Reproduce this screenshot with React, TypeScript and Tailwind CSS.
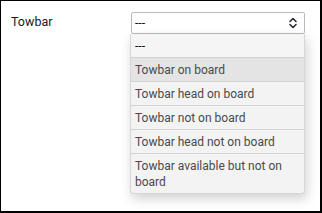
import React from 'react';

const OPTIONS = [
    'Towbar on board',
    'Towbar head on board',
    'Towbar not on board',
    'Towbar head not on board',
    'Towbar available but not on board',
];

const UpDown = () => (
    <svg width="10" height="14" viewBox="0 0 10 14" fill="none" stroke="#2b2b33" strokeWidth="1.6" strokeLinecap="round" strokeLinejoin="round">
        <path d="M2 5.5 5 2.5 8 5.5" />
        <path d="M2 8.5 5 11.5 8 8.5" />
    </svg>
);

export default function App() {
    return (
        <div className="w-[322px] h-[213px] bg-white border-black border-t border-l border-r-2 border-b-2 overflow-hidden font-['Roboto',sans-serif] text-[12px] leading-[16px]">
            <div className="flex items-start pt-[11px] pl-[10px]">
                <div className="w-[120px] pt-[1.5px] text-[#1a1a1a] text-[12.5px]">Towbar</div>
                <div className="relative">
                    <div className="w-[174px] h-[22px] border border-[#b9b9b9] rounded-[2px] bg-white flex items-center justify-between pl-[3px] pr-[6px] text-[#111]">
                        <span>---</span>
                        <UpDown />
                    </div>
                    <div className="absolute left-[-1px] top-[22px] w-[175px] bg-[#f3f3f3] border-x border-b border-[#d6d6d6] rounded-b-[3px] shadow-[2px_5px_12px_rgba(0,0,0,0.18)] text-[#4a4a4a]">
                        <div className="h-[24px] px-[4px] pt-[4px] border-b border-[#d2d2d2] text-[#111] bg-[#f5f5f5]">---</div>
                        {OPTIONS.map((o, i) => (
                            <div
                                key={o}
                                className={`px-[4px] py-[3.5px] pr-[8px] ${i < OPTIONS.length - 1 ? 'border-b border-[#d2d2d2]' : ''} ${i === 0 ? 'bg-[#e4e4e4]' : ''}`}
                            >
                                {o}
                            </div>
                        ))}
                    </div>
                </div>
            </div>
        </div>
    );
}
